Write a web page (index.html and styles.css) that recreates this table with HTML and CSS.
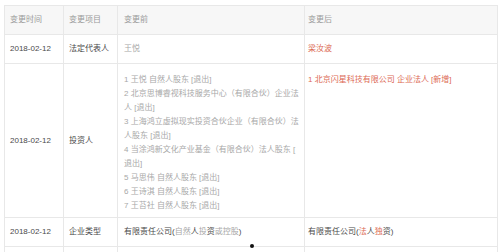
FILE: index.html
```html
<!DOCTYPE html>
<html lang="zh-CN">
<head>
<meta charset="utf-8">
<title>变更记录</title>
<link rel="stylesheet" href="styles.css">
</head>
<body>
<div class="wrap">
<table class="changes">
  <colgroup>
    <col class="c-date">
    <col class="c-item">
    <col class="c-before">
    <col class="c-after">
  </colgroup>
  <thead>
    <tr>
      <th>变更时间</th>
      <th>变更项目</th>
      <th class="before">变更前</th>
      <th class="after">变更后</th>
    </tr>
  </thead>
  <tbody>
    <tr>
      <td>2018-02-12</td>
      <td>法定代表人</td>
      <td class="before muted">王悦</td>
      <td class="after red">梁汝波</td>
    </tr>
    <tr class="multi">
      <td>2018-02-12</td>
      <td>投资人</td>
      <td class="before muted list">
        <div>1 王悦 自然人股东 [退出]</div>
        <div>2 北京思博睿视科技服务中心（有限合伙）企业法人 [退出]</div>
        <div>3 上海鸿立虚拟现实投资合伙企业（有限合伙）法人股东 [退出]</div>
        <div>4 当涂鸿新文化产业基金（有限合伙）法人股东 [退出]</div>
        <div>5 马思伟 自然人股东 [退出]</div>
        <div>6 王诗淇 自然人股东 [退出]</div>
        <div>7 王苔社 自然人股东 [退出]</div>
      </td>
      <td class="after red list">
        <div>1 北京闪星科技有限公司 企业法人 [新增]</div>
      </td>
    </tr>
    <tr>
      <td>2018-02-12</td>
      <td>企业类型</td>
      <td class="before">有限责任公司(<span class="muted">自然</span>人<span class="muted">投</span>资<span class="muted">或控股</span>)</td>
      <td class="after">有限责任公司(<span class="red">法</span>人<span class="red">独</span>资)</td>
    </tr>
    <tr class="next">
      <td></td><td></td><td class="before"></td><td class="after"></td>
    </tr>
  </tbody>
</table>
<span class="dot"></span>
</div>
</body>
</html>
```

FILE: styles.css
```css
html, body {
  margin: 0;
  padding: 0;
  background: #ffffff;
}
body {
  padding: 5px 3px 0 4px;
  font-family: "Liberation Sans", "Noto Sans CJK SC", sans-serif;
  font-size: 8px;
  color: #555555;
  overflow: hidden;
  height: 252px;
  box-sizing: border-box;
}
.wrap {
  position: relative;
}
.changes {
  width: 493px;
  border-collapse: collapse;
  table-layout: fixed;
}
.c-date { width: 59px; }
.c-item { width: 54px; }
.c-before { width: 187px; }
.c-after { width: 193px; }

.changes th,
.changes td {
  border: 1px solid #e8e8e8;
  padding: 7px 3px 7px 5px;
  line-height: 14px;
  text-align: left;
  vertical-align: middle;
  font-weight: normal;
  white-space: normal;
}
.changes th {
  background: #f7f7f7;
  color: #9a9a9a;
  height: 14px;
}
.changes td {
  height: 14px;
  color: #4a4a4a;
}
.changes .before {
  padding-left: 6px;
  padding-right: 2px;
  line-break: anywhere;
}
.changes .after {
  padding-left: 3px;
}
.changes td.list {
  vertical-align: top;
  padding-top: 9px;
  padding-bottom: 4px;
}
.changes td.muted,
.changes .muted {
  color: #a8a8a8;
}
.changes td.red,
.changes .red {
  color: #dc6a55;
}
.changes tr.next td {
  height: 20px;
}
.dot {
  position: absolute;
  left: 246px;
  top: 239px;
  width: 4px;
  height: 4px;
  border-radius: 50%;
  background: #111111;
}
```
